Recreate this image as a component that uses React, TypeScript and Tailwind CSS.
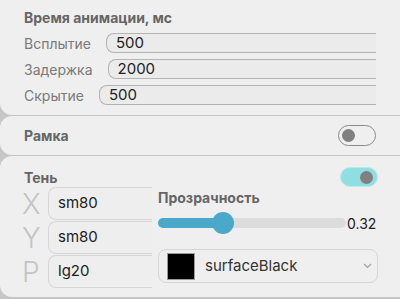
import React from 'react';

function Toggle({ on }: { on: boolean }) {
    return on ? (
        <div className="flex h-[20px] w-[38px] items-center justify-end rounded-full border border-[#b8ecec] bg-[#8fdfe0] pr-[4px]">
            <div className="h-[13px] w-[13px] rounded-full bg-[#808080]" />
        </div>
    ) : (
        <div className="flex h-[21px] w-[38px] items-center rounded-full border border-[#8a8a8a] bg-[#efefef] pl-[3px]">
            <div className="h-[13px] w-[13px] rounded-full bg-[#808080]" />
        </div>
    );
}

function TimeRow({ label, value }: { label: string; value: string }) {
    return (
        <div className="flex h-[20px] items-center gap-[15px]">
            <span className="text-[14px] text-[#7a7a7a]">{label}</span>
            <div className="flex h-[20px] flex-1 items-center rounded-l-lg border border-r-0 border-[#b3b3b3] bg-[#ebebeb] pl-[9px] text-[15px] text-[#222]">
                {value}
            </div>
        </div>
    );
}

function ShadowRow({ axis, value }: { axis: string; value: string }) {
    return (
        <div className="flex h-[33px] items-center">
            <span className="w-[26px] text-[28px] font-light leading-none text-[#c4c4c4]">{axis}</span>
            <div className="flex h-[33px] w-[104px] items-center rounded-l-lg border border-r-0 border-[#d6d6d6] bg-[#eeeeee] pl-[9px] text-[15px] text-[#222]">
                {value}
            </div>
        </div>
    );
}

export default function App() {
    const opacity = 0.32;
    return (
        <div className="h-[299px] w-[400px] overflow-hidden bg-[#c6c6c6] font-['Inter',sans-serif]">
            <div className="flex w-[412px] flex-col gap-px">
                <div className="rounded-b-xl bg-[#efefef] pb-[10px] pl-[24px] pr-[36px] pt-[10px]">
                    <div className="text-[14px] font-bold leading-[16px] text-[#666]">Время анимации, мс</div>
                    <div className="mt-[7px] flex flex-col gap-[6px]">
                        <TimeRow label="Всплытие" value="500" />
                        <TimeRow label="Задержка" value="2000" />
                        <TimeRow label="Скрытие" value="500" />
                    </div>
                </div>
                <div className="flex h-[39px] items-center justify-between rounded-xl bg-[#efefef] pl-[24px] pr-[36px]">
                    <span className="text-[14px] font-bold text-[#666]">Рамка</span>
                    <Toggle on={false} />
                </div>
                <div className="h-[141px] rounded-xl bg-[#efefef] pl-[22px] pr-[34px] pt-[11px]">
                    <div className="flex h-[20px] items-center justify-between pl-[2px]">
                        <span className="text-[14px] font-bold text-[#666]">Тень</span>
                        <Toggle on={true} />
                    </div>
                    <div className="flex">
                        <div className="flex flex-col gap-[1px]">
                            <ShadowRow axis="X" value="sm80" />
                            <ShadowRow axis="Y" value="sm80" />
                            <ShadowRow axis="P" value="lg20" />
                        </div>
                        <div className="ml-[6px] flex flex-1 flex-col">
                            <span className="text-[14px] font-bold text-[#666]">Прозрачность</span>
                            <div className="mt-[3px] flex h-[24px] items-center">
                                <div className="relative h-[10px] w-[188px] rounded-full bg-[#dcdcdc]">
                                    <div className="h-[10px] rounded-full bg-[#4aa8c8]" style={{ width: `${opacity * 188 + 5}px` }} />
                                    <div
                                        className="absolute top-[-6px] h-[22px] w-[22px] rounded-full bg-[#4aa8c8]"
                                        style={{ left: `${opacity * 188 - 6}px` }}
                                    />
                                </div>
                                <span className="ml-[1px] text-[14px] text-[#222]">0.32</span>
                            </div>
                            <div className="mt-[14px] flex h-[34px] items-center rounded-lg border border-[#d6d6d6] bg-[#efefef] pl-[8px] pr-[5px]">
                                <div className="h-[27px] w-[28px] border border-[#9a9a9a] bg-black" />
                                <span className="ml-[10px] flex-1 text-[15px] text-[#333]">surfaceBlack</span>
                                <svg width="9" height="6" viewBox="0 0 9 6" fill="none" stroke="#a0a0a0" strokeWidth="1.2">
                                    <path d="M1 1l3.5 3.5L8 1" />
                                </svg>
                            </div>
                        </div>
                    </div>
                </div>
            </div>
        </div>
    );
}
